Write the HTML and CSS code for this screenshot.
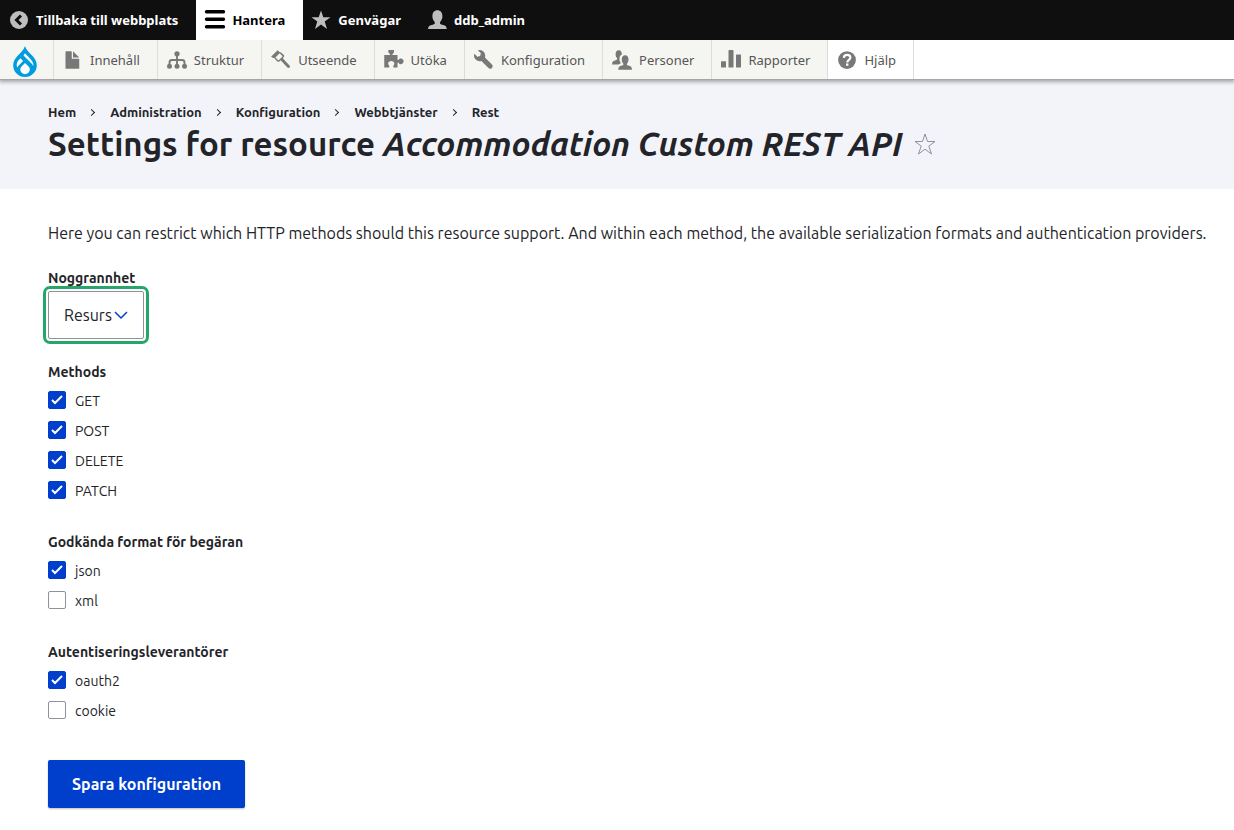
FILE: index.html
```html
<!DOCTYPE html>
<html lang="sv">
<head>
<meta charset="utf-8">
<meta name="viewport" content="width=device-width, initial-scale=1">
<title>Settings for resource Accommodation Custom REST API</title>
<link rel="stylesheet" href="styles.css">
</head>
<body>
<nav class="toolbar-bar" aria-label="Verktygsfält">
  <a class="tab" href="#"><svg class="icon" viewBox="0 0 20 20"><circle cx="10" cy="10" r="9" fill="#bebebe"/><path d="M12 5.500l-4.500 4.500l4.500 4.500" fill="none" stroke="#0f0f0f" stroke-width="3"/></svg>Tillbaka till webbplats</a>
  <a class="tab tab-active" href="#"><svg class="icon" viewBox="0 0 20 20"><path d="M1.500 1.700h17M1.500 9.200h17M1.500 16.700h17" stroke="#000" stroke-width="3.400" stroke-linecap="round"/></svg>Hantera</a>
  <a class="tab" href="#"><svg class="icon" viewBox="0 0 20 20" fill="#bebebe"><path d="M9 .5l2.300 6.800h7.200l-5.800 4.200 2.300 7.500-6-4.500-6 4.500 2.300-7.500L-.5 7.300h7.200z"/></svg>Genvägar</a>
  <a class="tab" href="#"><svg class="icon" viewBox="0 0 20 20" fill="#bebebe"><path d="M0 19c.2-2.500 1.200-3.500 3.600-4 1.700-.4 3.300-.8 3.300-2 0-.8-.4-1.300-1-2.100C4.800 9.500 4.400 8 4.400 6c0-3.500 1.800-5.800 5-5.800s5 2.300 5 5.800c0 2-.4 3.500-1.500 4.900-.6.8-1 1.300-1 2.100 0 1.200 1.600 1.600 3.300 2 2.400.5 3.400 1.500 3.600 4z"/></svg>ddb_admin</a>
</nav>
<nav class="tray" aria-label="Administration">
  <a class="tray-link tray-home" href="#" aria-label="Drupal"><svg class="drop" viewBox="0 0 24 31"><path d="M12 0c1.200 4 4 6.200 6.600 9 3 3.100 5.200 6 5.200 10.200C23.800 25.800 18.500 31 12 31S.2 25.800.2 19.200C.2 15 2.400 12.100 5.400 9 8 6.200 10.800 4 12 0z" fill="#009cde"/><g fill="#fff"><path d="M12 7.300c1.300 1.600 2.900 3.100 4.500 4.800 2.500 2.600 4.100 4.800 3.900 8-.5-1.200-1.500-2.300-2.600-3.400l-7.300-7.300z"/><path d="M7.500 12.300l2.600 2.600-4 4c-.7.700-1.400 1.500-1.700 2.500-.4-.6-.7-1.400-.7-2.500 0-2.600 1.700-4.600 3.800-6.600z"/><path d="M12 16.900l3.300 3.300c1 1 1.500 2 1.500 3.200a4.700 4.700 0 0 1-9.500 0c0-1.200.5-2.200 1.500-3.200z"/></g></svg></a>
  <a class="tray-link" href="#"><svg class="icon" viewBox="0 0 16 16"><path d="M12.500 7h-5a.5.5 0 0 1-.5-.5v-5a.5.5 0 0 0-.5-.5h-4a.5.5 0 0 0-.5.500v13a.5.500 0 0 0 .5.500h10a.5.500 0 0 0 .5-.5v-7a.5.500 0 0 0-.5-.5zM8.500 6h4c.3 0 .3-.2.100-.4L8.400 1.400c-.2-.2-.4-.1-.4.100v4c0 .3.200.5.500.5z"/></svg>Innehåll</a>
  <a class="tray-link" href="#"><svg class="icon" viewBox="0 0 16 16"><path d="M8 3v9M2 13V10a2 2 0 0 1 2-2h8a2 2 0 0 1 2 2v3" fill="none" stroke="#787878" stroke-width="1.500"/><circle cx="8" cy="3" r="2.100"/><circle cx="2" cy="13" r="2"/><circle cx="8" cy="13" r="2"/><circle cx="14" cy="13" r="2"/></svg>Struktur</a>
  <a class="tray-link" href="#"><svg class="icon" viewBox="0 0 16 16"><path fill-rule="evenodd" d="M0 5.400L5.300.200l1 .9c.7.800 1.500.5 2.200 1.200l1.700 1.600c.5.500.5 1.200.1 1.700l-.9.900 5.400 5.800c.5.600.5 1.200 0 1.700s-1.200.5-1.700 0L7.700 8.200l-1 .9c-.5.500-1.100.5-1.600 0L3.400 7.400c-.6-.6-.5-1.300-1.200-.9zM3.500 5.900l2.500 2.400 3.400-3.300-2.500-2.400z"/></svg>Utseende</a>
  <a class="tray-link" href="#"><svg class="icon" viewBox="0 0 16 16"><path d="M.2 4h4.200c.6 0 .7-.5.400-.9C4 2.500 3.500 2.200 3.500 1.300V0H8v1.300c0 .9-.6 1.200-1.200 1.800-.3.400-.2.900.4.900h3.600v3.400c0 .6.500.7.900.3.500-.6.900-1 1.700-1 1.200 0 2.300.9 2.300 2.300s-1.100 2.300-2.300 2.300c-.8 0-1.200-.4-1.700-1-.4-.4-.9-.2-.9.300V14H7.500v-1.300c0-.3.200-.5.400-.8.300-.4.400-.8.400-1.100 0-1.300-1.100-2.100-2.500-2.100s-2.500.8-2.500 2.100c0 .4.200.8.500 1.100.2.200.4.500.4.800V14H.2z"/></svg>Utöka</a>
  <a class="tray-link" href="#"><svg class="icon" viewBox="0 0 16 16"><path d="M14.400 11.600L8.750 5.920c.15-.45.250-.92.250-1.420A4.500 4.500 0 0 0 3.070.26L5.500 2.690l-.59 2.190-2.200.59L.27 3.030A4.500 4.500 0 0 0 5.920 8.750l5.670 5.660a2 2 0 0 0 2.830-2.820z"/></svg>Konfiguration</a>
  <a class="tray-link" href="#"><svg class="icon" viewBox="0 0 16 16"><path d="M6.700 9.800c-.7-1-.7-2-.7-3 0-1.500.6-2.700 1.900-3.200C7.800 1.500 7.300.2 5.400.2 3.600.2 2.900 1.500 2.900 3.300c0 1 .2 2 .8 2.700.8 1.200.5 1.900-.7 2.200C1 8.700.1 9.200 0 11.600h5.200c.4-.4 1.200-.7 1.600-.9.200-.1.100-.7-.1-.9z"/><path d="M5 15.800c.1-2.300.9-2.900 2.900-3.400 1.400-.3 1.500-1 .8-2.100-.7-.8-.9-1.700-.9-2.800 0-2 .9-3.300 2.700-3.300s2.700 1.300 2.700 3.300c0 1.100-.2 2-.9 2.800-.7 1.100-.6 1.800.8 2.100 2 .5 2.800 1.100 2.900 3.400z"/></svg>Personer</a>
  <a class="tray-link" href="#"><svg class="icon" viewBox="0 0 16 16"><rect x="0" y="9" width="4" height="5" rx=".5"/><rect x="6" y="0" width="4" height="14" rx=".5"/><rect x="12" y="3.500" width="4" height="10.500" rx=".5"/></svg>Rapporter</a>
  <a class="tray-link tray-help" href="#"><svg class="icon" viewBox="0 0 16 16"><circle cx="8" cy="8" r="7.100"/><path d="M5.400 6.300c.1-1.500 1.100-2.400 2.700-2.400 1.500 0 2.600.9 2.600 2.100 0 1.900-2.500 1.900-2.500 4" fill="none" stroke="#fff" stroke-width="1.700"/><rect x="7.200" y="10.800" width="1.900" height="1.800" fill="#fff"/></svg>Hjälp</a>
</nav>
<header class="page-header">
  <nav aria-label="Länkstig">
    <ol class="breadcrumb">
      <li><a href="#">Hem</a></li>
      <li><a href="#">Administration</a></li>
      <li><a href="#">Konfiguration</a></li>
      <li><a href="#">Webbtjänster</a></li>
      <li><a href="#">Rest</a></li>
    </ol>
  </nav>
  <div class="title-row">
    <h1 class="title">Settings for resource <em>Accommodation Custom REST API</em></h1>
    <a class="shortcut" href="#" aria-label="Lägg till genväg"><svg viewBox="0 0 22 22"><path d="M11 1l2.500 7.500h7.500l-6.200 4.600 2.700 7.900L11 16.200 4.500 21l2.700-7.900L1 8.500h7.500z" fill="none" stroke="#8e929c"/></svg></a>
  </div>
</header>
<main class="content">
  <p class="intro">Here you can restrict which HTTP methods should this resource support. And within each method, the available serialization formats and authentication providers.</p>
  <form>
    <div class="field">
      <label class="label" for="granularity">Noggrannhet</label>
      <select class="select" id="granularity"><option>Resurs</option></select>
    </div>
    <fieldset class="group">
      <legend class="label">Methods</legend>
      <label class="check"><input type="checkbox" checked>GET</label>
      <label class="check"><input type="checkbox" checked>POST</label>
      <label class="check"><input type="checkbox" checked>DELETE</label>
      <label class="check"><input type="checkbox" checked>PATCH</label>
    </fieldset>
    <fieldset class="group">
      <legend class="label">Godkända format för begäran</legend>
      <label class="check"><input type="checkbox" checked>json</label>
      <label class="check"><input type="checkbox">xml</label>
    </fieldset>
    <fieldset class="group">
      <legend class="label">Autentiseringsleverantörer</legend>
      <label class="check"><input type="checkbox" checked>oauth2</label>
      <label class="check"><input type="checkbox">cookie</label>
    </fieldset>
    <button class="submit" type="submit">Spara konfiguration</button>
  </form>
</main>
</body>
</html>
```
FILE: styles.css
```css
* {
  box-sizing: border-box;
}

body {
  margin: 0;
  background: #fff;
  color: #232429;
  font-family: Ubuntu, Lato, sans-serif;
  font-size: 16px;
  line-height: 24px;
}

a {
  color: inherit;
  text-decoration: none;
}

.toolbar-bar,
.tray {
  display: flex;
  font-family: "Noto Sans", sans-serif;
  font-size: 13px;
  line-height: 18px;
}

.toolbar-bar {
  height: 40px;
  background: #0f0f0f;
  color: #fff;
  font-weight: 700;
}

.tab {
  display: flex;
  align-items: center;
  gap: 7px;
  padding: 0 18px 0 9px;
}

.tab-active {
  background: #fff;
  color: #000;
}

.tab-active ~ .tab {
  gap: 6px;
}

.icon {
  flex: none;
  width: 20px;
  height: 20px;
  overflow: visible;
}

.tray {
  position: relative;
  height: 40px;
  border-bottom: 1px solid #a6a6a6;
  background: #fff;
  box-shadow: 0 1px 4px 1px rgba(0, 0, 0, 0.33);
  clip-path: inset(0 0 -10px 0);
  color: #565656;
}

.tray-link {
  display: flex;
  align-items: center;
  gap: 7px;
  padding: 0 17px 0 9px;
  border-right: 1px solid #ddd;
  background: #f5f5f2;
}

.tray-link .icon {
  fill: #787878;
}

.tray-home {
  padding: 3px 16px 0 13px;
}

.drop {
  width: 24px;
  height: 31px;
}

.tray-help {
  background: #fff;
}

.page-header {
  padding: 22px 48px 24px;
  background: #f3f4f9;
}

.breadcrumb {
  display: flex;
  margin: 0;
  padding: 0;
  font-size: 13px;
  font-weight: 700;
  line-height: 20px;
  list-style: none;
}

.breadcrumb li {
  display: flex;
  align-items: center;
}

.breadcrumb li + li::before {
  width: 4px;
  height: 4px;
  margin: 0 16px 0 13px;
  border: solid #232429;
  border-width: 1px 1px 0 0;
  content: "";
  transform: rotate(45deg);
}

.title-row {
  display: flex;
  align-items: center;
  gap: 12px;
}

.title {
  margin: 0;
  font-size: 33px;
  font-weight: 700;
  line-height: 43px;
}

.shortcut,
.shortcut svg {
  display: block;
  width: 22px;
  height: 22px;
}

.content {
  padding: 32px 24px 22px 48px;
}

.intro {
  margin: 0 0 24px;
}

.field {
  margin-bottom: 24px;
}

.label {
  display: block;
  padding: 0;
  font-size: 14px;
  font-weight: 700;
  line-height: 18px;
}

.select {
  display: block;
  height: 48px;
  margin-top: 4px;
  padding: 0 31px 0 15px;
  border: 1px solid #8e929c;
  border-radius: 2px;
  outline: 3px solid #26a769;
  outline-offset: 2px;
  appearance: none;
  background: #fff url("data:image/svg+xml,%3Csvg xmlns='http://www.w3.org/2000/svg' width='14' height='9'%3E%3Cpath d='M1 1l6 6 6-6' fill='none' stroke='%23003ecc' stroke-width='1.500'/%3E%3C/svg%3E") no-repeat right 15px center;
  color: #232429;
  font: inherit;
}

.group {
  min-width: 0;
  margin: 0 0 32px;
  padding: 0;
  border: 0;
}

.check {
  display: flex;
  align-items: flex-start;
  gap: 9px;
  width: fit-content;
  margin-top: 10px;
  font-size: 14px;
  line-height: 20px;
}

.check input {
  flex: none;
  width: 18px;
  height: 18px;
  margin: 0;
  border: 1px solid #8e929c;
  border-radius: 2px;
  appearance: none;
  background: #fff;
}

.check input:checked {
  border-color: #003ecc;
  background: #003ecc url("data:image/svg+xml,%3Csvg xmlns='http://www.w3.org/2000/svg' width='16' height='16'%3E%3Cpath d='M3 8l3 3 7-7' fill='none' stroke='white' stroke-width='2'/%3E%3C/svg%3E") center no-repeat;
}

.submit {
  display: block;
  height: 48px;
  margin-top: 39px;
  padding: 0 24px;
  border: 0;
  border-radius: 2px;
  background: #003ecc;
  box-shadow: 0 1px 2px rgba(0, 0, 0, 0.25);
  color: #fff;
  font: inherit;
  font-weight: 700;
}
```
